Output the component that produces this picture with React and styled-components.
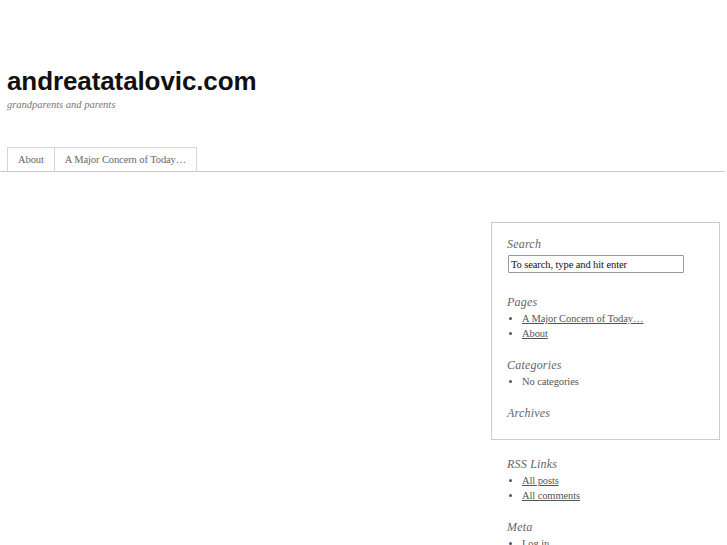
import React from "react";
import styled, { createGlobalStyle } from "styled-components";

const Global = createGlobalStyle`
  html, body {
    margin: 0;
    padding: 0;
    background: #fff;
  }
  body {
    font-family: "Liberation Serif", "Times New Roman", serif;
    color: #555;
  }
`;

export default function App() {
  return (
    <>
      <Global />
      <Page>
        <Header>
          <SiteTitle>andreatatalovic.com</SiteTitle>
          <Tagline>grandparents and parents</Tagline>
        </Header>
        <Nav>
          <Tab>About</Tab>
          <Tab>A Major Concern of Today…</Tab>
        </Nav>
        <Main>
          <Content />
          <Sidebar>
            <Box>
              <Widget>
                <WidgetTitle>Search</WidgetTitle>
                <SearchInput defaultValue="To search, type and hit enter" />
              </Widget>
              <Widget>
                <WidgetTitle>Pages</WidgetTitle>
                <List>
                  <Item><Link href="#">A Major Concern of Today…</Link></Item>
                  <Item><Link href="#">About</Link></Item>
                </List>
              </Widget>
              <Widget>
                <WidgetTitle>Categories</WidgetTitle>
                <List>
                  <Item>No categories</Item>
                </List>
              </Widget>
              <Widget last>
                <WidgetTitle>Archives</WidgetTitle>
              </Widget>
            </Box>
            <Outside>
              <Widget>
                <WidgetTitle>RSS Links</WidgetTitle>
                <List>
                  <Item><Link href="#">All posts</Link></Item>
                  <Item><Link href="#">All comments</Link></Item>
                </List>
              </Widget>
              <Widget>
                <WidgetTitle>Meta</WidgetTitle>
                <List>
                  <Item><Link href="#">Log in</Link></Item>
                </List>
              </Widget>
            </Outside>
          </Sidebar>
        </Main>
      </Page>
    </>
  );
}

const Page = styled.div`
  width: 727px;
  height: 545px;
  overflow: hidden;
`;

const Header = styled.header`
  padding: 66px 7px 35px;
`;

const SiteTitle = styled.h1`
  margin: 0;
  font-family: "Liberation Sans", Arial, sans-serif;
  font-weight: bold;
  font-size: 26px;
  line-height: 30px;
  color: #111;
  letter-spacing: -0.1px;
`;

const Tagline = styled.p`
  margin: 2px 0 0;
  font-style: italic;
  font-size: 10.5px;
  line-height: 14px;
  color: #777;
`;

const Nav = styled.nav`
  display: flex;
  padding: 0 7px;
  border-bottom: 1px solid #ccc;
  height: 24px;
  margin-right: 2px;
`;

const Tab = styled.div`
  display: flex;
  align-items: center;
  padding: 0 10px;
  border: 1px solid #d4d4d4;
  border-bottom: none;
  font-size: 10.5px;
  letter-spacing: -0.1px;
  color: #666;
  & + & {
    border-left: none;
  }
`;

const Main = styled.div`
  display: flex;
  padding-top: 50px;
`;

const Content = styled.div`
  flex: 0 0 491px;
`;

const Sidebar = styled.aside`
  width: 229px;
`;

const Box = styled.div`
  border: 1px solid #ccc;
  padding: 13px 15px 0 15px;
  height: 218px;
  box-sizing: border-box;
`;

const Outside = styled.div`
  padding: 16px 16px 0 16px;
`;

const Widget = styled.div`
  margin-bottom: ${(p) => (p.last ? "0" : "16px")};
`;

const WidgetTitle = styled.h2`
  margin: 0 0 1px;
  font-size: 12px;
  font-weight: normal;
  font-style: italic;
  letter-spacing: 0.2px;
  line-height: 16px;
  color: #666;
`;

const SearchInput = styled.input`
  display: block;
  margin: 3px 0 21px 1px;
  width: 176px;
  height: 18px;
  box-sizing: border-box;
  padding: 0 2px;
  border: 1px solid #999;
  border-radius: 1px;
  font-family: "Liberation Serif", "Times New Roman", serif;
  font-size: 10.5px;
  letter-spacing: -0.1px;
  color: #111;
  outline: none;
`;

const List = styled.ul`
  margin: 0;
  padding: 0 0 0 15px;
  list-style: disc;
`;

const Item = styled.li`
  font-size: 10.5px;
  letter-spacing: -0.1px;
  line-height: 15px;
  color: #555;
  &::marker {
    font-size: 10px;
    color: #555;
  }
`;

const Link = styled.a`
  color: #555;
  text-decoration: underline;
`;
